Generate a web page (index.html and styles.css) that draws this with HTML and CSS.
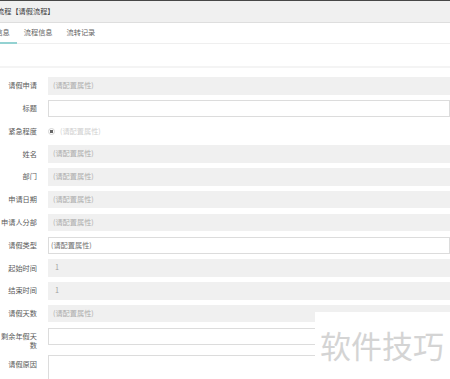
FILE: index.html
```html
<!DOCTYPE html>
<html lang="zh-CN">
<head>
    <meta charset="UTF-8">
    <meta name="viewport" content="width=device-width, initial-scale=1.0">
    <title>请假流程</title>
    <link rel="stylesheet" href="styles.css">
</head>
<body>
    <div class="page">
        <div class="titlebar">
            <span class="title">流程【请假流程】</span>
        </div>

        <div class="tabs">
            <span class="tab active">基本信息</span>
            <span class="tab">流程信息</span>
            <span class="tab">流转记录</span>
        </div>

        <div class="spacer"></div>

        <div class="form">
            <div class="row">
                <label class="label">请假申请</label>
                <div class="field readonly">(请配置属性)</div>
            </div>
            <div class="row">
                <label class="label">标题</label>
                <div class="field input"></div>
            </div>
            <div class="row">
                <label class="label">紧急程度</label>
                <div class="field radio-field"><span class="radio"></span><span class="hint">(请配置属性)</span></div>
            </div>
            <div class="row">
                <label class="label">姓名</label>
                <div class="field readonly">(请配置属性)</div>
            </div>
            <div class="row">
                <label class="label">部门</label>
                <div class="field readonly">(请配置属性)</div>
            </div>
            <div class="row">
                <label class="label">申请日期</label>
                <div class="field readonly">(请配置属性)</div>
            </div>
            <div class="row">
                <label class="label">申请人分部</label>
                <div class="field readonly">(请配置属性)</div>
            </div>
            <div class="row">
                <label class="label">请假类型</label>
                <div class="field input select">(请配置属性)</div>
            </div>
            <div class="row">
                <label class="label">起始时间</label>
                <div class="field readonly value">1</div>
            </div>
            <div class="row">
                <label class="label">结束时间</label>
                <div class="field readonly value">1</div>
            </div>
            <div class="row">
                <label class="label">请假天数</label>
                <div class="field readonly">(请配置属性)</div>
            </div>
            <div class="row">
                <label class="label">剩余年假天数</label>
                <div class="field input"></div>
            </div>
            <div class="row">
                <label class="label">请假原因</label>
                <div class="field input textarea"></div>
            </div>
        </div>

        <div class="watermark">软件技巧</div>
    </div>
</body>
</html>
```

FILE: styles.css
```css
body {
    margin: 0;
    font-family: "Noto Sans CJK SC", "Liberation Sans", sans-serif;
    font-size: 7.2px;
    color: #666;
    background: #fff;
    overflow: hidden;
}
.page {
    position: relative;
    width: 450px;
    height: 379px;
    overflow: hidden;
}
.titlebar {
    height: 21px;
    line-height: 21px;
    background: #f0f0f0;
    border-top: 1px solid #474747;
    border-bottom: 1px solid #dedede;
    color: #3a3a3a;
}
.title {
    display: block;
    margin-left: -3px;
}
.tabs {
    display: flex;
    margin-left: -26px;
    border-bottom: 1px solid #efefef;
}
.tab {
    line-height: 19px;
    padding: 0 7px;
    border-bottom: 2px solid transparent;
    margin-bottom: -1px;
    color: #666;
}
.tab.active {
    border-bottom-color: #93d2d2;
}
.spacer {
    height: 22px;
    border-bottom: 2px solid #f4f4f4;
}
.form {
    padding-top: 9px;
}
.row {
    display: flex;
    align-items: flex-start;
    gap: 11px;
    margin-bottom: 5.3px;
}
.label {
    width: 37px;
    flex-shrink: 0;
    text-align: right;
    padding-top: 4.3px;
    line-height: 9px;
    color: #5a5a5a;
}
.field {
    flex: 1;
    height: 17.5px;
    line-height: 17.5px;
    box-sizing: border-box;
    padding-left: 5px;
}
.readonly {
    background: #f0f0f0;
    color: #adadad;
}
.value {
    padding-left: 7px;
    color: #a0a0a0;
}
.input {
    background: #fff;
    border: 1px solid #dcdcdc;
    line-height: 15.5px;
}
.select {
    padding-left: 2px;
    color: #707070;
}
.textarea {
    height: 40px;
}
.radio-field {
    display: flex;
    align-items: center;
    gap: 5px;
    padding-left: 0;
}
.radio {
    width: 5px;
    height: 5px;
    border-radius: 50%;
    border: 1px solid #d4d4d4;
    background: radial-gradient(circle, #666 45%, #fff 55%);
}
.hint {
    color: #d0d0d0;
}
.watermark {
    position: absolute;
    left: 315px;
    top: 312px;
    right: 0;
    bottom: 0;
    background: #fff;
    padding: 16px 0 0 5px;
    font-size: 31px;
    line-height: 34px;
    color: #d4d4d4;
}
```
